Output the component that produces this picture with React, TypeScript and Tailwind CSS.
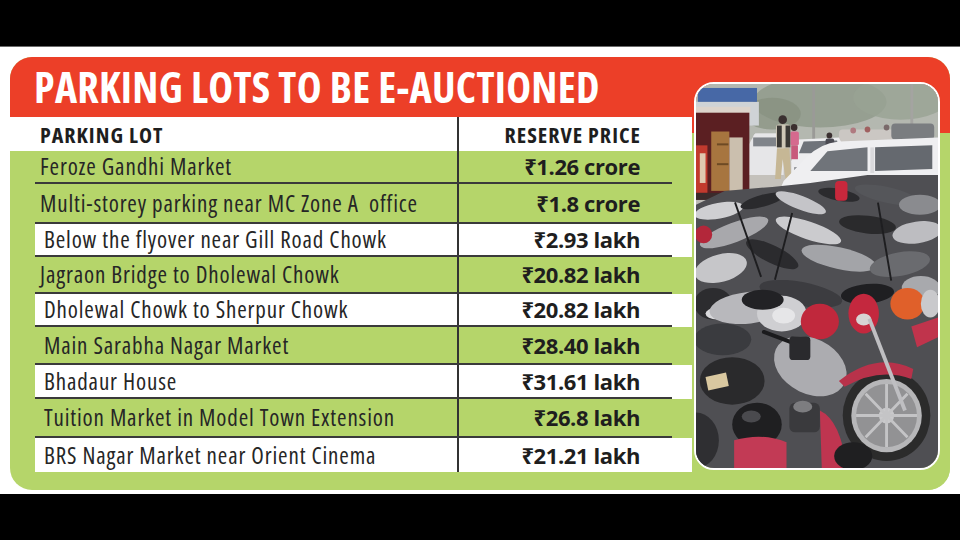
import React from 'react';

type Row = { name: string; price: string; white: boolean; h: number; pad: string };

const ROWS: Row[] = [
  { name: 'Feroze Gandhi Market', price: '₹1.26 crore', white: false, h: 33, pad: 'pl-[5px]' },
  { name: 'Multi-storey parking near MC Zone A  office', price: '₹1.8 crore', white: false, h: 40, pad: 'pl-[5px]' },
  { name: 'Below the flyover near Gill Road Chowk', price: '₹2.93 lakh', white: true, h: 33, pad: 'pl-[9px]' },
  { name: 'Jagraon Bridge to Dholewal Chowk', price: '₹20.82 lakh', white: false, h: 37, pad: 'pl-[5px]' },
  { name: 'Dholewal Chowk to Sherpur Chowk', price: '₹20.82 lakh', white: true, h: 33, pad: 'pl-[9px]' },
  { name: 'Main Sarabha Nagar Market', price: '₹28.40 lakh', white: false, h: 38, pad: 'pl-[9px]' },
  { name: 'Bhadaur House', price: '₹31.61 lakh', white: true, h: 34, pad: 'pl-[9px]' },
  { name: 'Tuition Market in Model Town Extension', price: '₹26.8 lakh', white: false, h: 39, pad: 'pl-[9px]' },
  { name: 'BRS Nagar Market near Orient Cinema', price: '₹21.21 lakh', white: true, h: 34, pad: 'pl-[9px]' },
];

const Photo = () => (
  <svg viewBox="0 0 254 388" className="block h-full w-full" preserveAspectRatio="none">
    {/* street + haze */}
    <rect width="254" height="388" fill="#bdbbb5" />
    <rect width="254" height="62" fill="#b4b8b0" />
    <ellipse cx="130" cy="18" rx="70" ry="26" fill="#8f9989" opacity="0.8" />
    <ellipse cx="215" cy="14" rx="50" ry="22" fill="#98a294" opacity="0.8" />
    <ellipse cx="80" cy="30" rx="30" ry="16" fill="#86907f" opacity="0.7" />
    <rect x="122" y="0" width="3" height="58" fill="#9a9a97" />
    <rect x="225" y="0" width="3" height="50" fill="#a4a4a1" />
    <rect x="0" y="18" width="66" height="24" fill="#cfd3d6" />
    <rect x="2" y="4" width="62" height="14" fill="#4768a6" />
    <rect x="0" y="56" width="254" height="60" fill="#c4c1bb" />
    {/* distant traffic */}
    <rect x="60" y="50" width="40" height="12" rx="4" fill="#dcdcde" />
    <rect x="150" y="46" width="60" height="12" rx="4" fill="#cbc7c3" />
    <circle cx="180" cy="46" r="3" fill="#a06060" />
    <circle cx="200" cy="44" r="3" fill="#7a6a6a" />
    <circle cx="165" cy="47" r="3" fill="#b07a80" />
    <rect x="205" y="40" width="45" height="16" rx="4" fill="#7a7d80" />
    {/* white car mid-left */}
    <path d="M55 62 L62 50 L88 50 L92 62 L92 92 L55 92 Z" fill="#e6e6e8" />
    <rect x="60" y="54" width="26" height="9" fill="#80848a" />
    {/* white car centre */}
    <path d="M100 78 L108 56 L150 54 L158 70 L158 96 L100 98 Z" fill="#ededef" />
    <path d="M108 70 L113 58 L148 57 L152 70 Z" fill="#6f737a" />
    <rect x="103" y="84" width="30" height="6" fill="#8d8f93" />
    {/* pink person */}
    <circle cx="103" cy="44" r="3.5" fill="#3b2f2f" />
    <rect x="99" y="48" width="9" height="14" rx="2" fill="#d56a8e" />
    <rect x="100" y="62" width="7" height="14" fill="#c85a7c" />
    {/* standing man */}
    <circle cx="91" cy="36" r="4.5" fill="#3a3030" />
    <rect x="84" y="41" width="15" height="24" rx="3" fill="#cfc8b8" />
    <rect x="85" y="42" width="5" height="22" fill="#3b3936" />
    <rect x="94" y="42" width="5" height="22" fill="#3b3936" />
    <path d="M85 65 L98 65 L100 96 L94 96 L91 76 L89 96 L83 96 Z" fill="#c6b795" />
    {/* boy */}
    <circle cx="140" cy="52" r="3" fill="#3a3030" />
    <rect x="136" y="55" width="9" height="20" rx="2" fill="#4a4a52" />
    {/* big white car right */}
    <path d="M86 112 L92 98 L116 74 Q130 60 150 58 L254 54 L254 118 L86 118 Z" fill="#efeff1" />
    <path d="M120 88 L138 68 L180 64 L180 88 Z" fill="#70747a" />
    <path d="M188 64 L248 62 L248 86 L188 88 Z" fill="#65696f" />
    <rect x="183" y="64" width="4" height="26" fill="#d9d9dc" />
    <rect x="210" y="95" width="16" height="4" rx="2" fill="#9c9ea2" />
    {/* truck */}
    <rect x="0" y="25" width="56" height="92" fill="#5b1f22" />
    <rect x="0" y="23" width="57" height="6" fill="#ddd4cb" />
    <rect x="16" y="48" width="19" height="60" fill="#a7753f" />
    <rect x="22" y="60" width="12" height="2" fill="#6d4a24" />
    <rect x="22" y="80" width="12" height="2" fill="#6d4a24" />
    <rect x="35" y="54" width="14" height="54" fill="#cbbfae" />
    <rect x="0" y="62" width="12" height="48" fill="#c23a2e" />
    <rect x="4" y="70" width="6" height="30" fill="#e0c8b0" />
    <rect x="0" y="110" width="58" height="7" fill="#3b2b2b" />
    {/* motorcycles base */}
    <path d="M0 122 L30 108 L80 104 L120 100 L180 92 L254 92 L254 388 L0 388 Z" fill="#4f4f53" />
    {/* upper rows of bikes */}
    <ellipse cx="24" cy="128" rx="26" ry="8" fill="#cfcfd2" transform="rotate(-10 24 128)" />
    <ellipse cx="70" cy="118" rx="24" ry="6" fill="#2a2a2d" transform="rotate(-15 70 118)" />
    <ellipse cx="110" cy="120" rx="28" ry="7" fill="#c4c4c8" transform="rotate(20 110 120)" />
    <ellipse cx="150" cy="112" rx="22" ry="6" fill="#2b2b2e" transform="rotate(10 150 112)" />
    <rect x="146" y="98" width="13" height="20" rx="4" fill="#c8283c" />
    <ellipse cx="200" cy="112" rx="34" ry="8" fill="#55565a" transform="rotate(12 200 112)" />
    <ellipse cx="235" cy="122" rx="22" ry="10" fill="#8a8b8f" />
    <ellipse cx="40" cy="150" rx="38" ry="10" fill="#a8a8ac" transform="rotate(-20 40 150)" />
    <ellipse cx="8" cy="152" rx="9" ry="9" fill="#b3273a" />
    <ellipse cx="118" cy="148" rx="36" ry="9" fill="#cbcbce" transform="rotate(18 118 148)" />
    <ellipse cx="180" cy="142" rx="30" ry="9" fill="#2a2a2c" transform="rotate(6 180 142)" />
    <ellipse cx="232" cy="150" rx="26" ry="11" fill="#bdbdc1" transform="rotate(-8 232 150)" />
    <ellipse cx="80" cy="172" rx="30" ry="9" fill="#2b2b2e" transform="rotate(25 80 172)" />
    <ellipse cx="150" cy="176" rx="40" ry="11" fill="#a3a4a8" transform="rotate(12 150 176)" />
    <ellipse cx="214" cy="182" rx="32" ry="12" fill="#6a6b6f" transform="rotate(-10 214 182)" />
    <ellipse cx="26" cy="186" rx="28" ry="14" fill="#c6c6c9" transform="rotate(-14 26 186)" />
    <rect x="40" y="120" width="2" height="80" fill="#1e1e20" transform="rotate(-20 40 120)" />
    <rect x="100" y="130" width="2" height="70" fill="#1e1e20" transform="rotate(15 100 130)" />
    <rect x="190" y="120" width="2" height="80" fill="#1e1e20" transform="rotate(-10 190 120)" />
    <ellipse cx="18" cy="222" rx="20" ry="16" fill="#2c2c2f" />
    <ellipse cx="22" cy="232" rx="12" ry="6" fill="#d9d9dc" />
    <ellipse cx="110" cy="212" rx="44" ry="12" fill="#3c3c40" transform="rotate(10 110 212)" />
    <ellipse cx="180" cy="212" rx="28" ry="10" fill="#1f1f22" transform="rotate(-5 180 212)" />
    <ellipse cx="236" cy="206" rx="20" ry="12" fill="#a8a9ad" />
    {/* lower large bikes */}
    <ellipse cx="56" cy="226" rx="42" ry="16" fill="#b8b8bc" transform="rotate(-6 56 226)" />
    <ellipse cx="90" cy="232" rx="26" ry="18" fill="#cfcfd2" />
    <ellipse cx="92" cy="234" rx="12" ry="8" fill="#e6e6e8" />
    <ellipse cx="70" cy="218" rx="22" ry="10" fill="#222225" />
    <ellipse cx="130" cy="240" rx="20" ry="18" fill="#c0283c" />
    <ellipse cx="176" cy="232" rx="16" ry="20" fill="#c4283e" />
    <ellipse cx="176" cy="238" rx="8" ry="6" fill="#d7d4d4" />
    <ellipse cx="222" cy="222" rx="18" ry="16" fill="#e0602a" />
    <ellipse cx="246" cy="222" rx="10" ry="14" fill="#c9c9cc" />
    <ellipse cx="28" cy="258" rx="30" ry="16" fill="#3a3b3f" />
    <ellipse cx="120" cy="285" rx="40" ry="28" fill="#acacb0" transform="rotate(25 120 285)" />
    <ellipse cx="38" cy="300" rx="34" ry="24" fill="#2a2a2c" />
    <rect x="10" y="296" width="22" height="14" fill="#d9c8a0" transform="rotate(-12 10 296)" />
    <rect x="70" y="248" width="46" height="4" rx="2" fill="#1b1b1d" transform="rotate(20 70 248)" />
    <rect x="98" y="255" width="22" height="24" rx="4" fill="#2a2a2d" />
    {/* wheel */}
    <circle cx="200" cy="335" r="46" fill="#2b2b2b" />
    <circle cx="200" cy="335" r="37" fill="#b7b7b9" />
    <circle cx="200" cy="335" r="32" fill="#929294" />
    <circle cx="200" cy="335" r="8" fill="#c9c9cb" />
    <path d="M200 303 L200 367 M168 335 L232 335 M178 313 L222 357 M222 313 L178 357" stroke="#c4c4c6" strokeWidth="3" />
    <path d="M150 300 Q190 270 228 288 L226 298 Q192 286 156 306 Z" fill="#b8324a" />
    <path d="M226 245 L254 236 L254 256 L232 266 Z" fill="#c0344c" />
    <rect x="180" y="238" width="4" height="100" fill="#bfbfc2" transform="rotate(-22 180 238)" />
    {/* helmet & red fairings bottom */}
    <ellipse cx="64" cy="344" rx="26" ry="22" fill="#1f1f21" />
    <ellipse cx="58" cy="336" rx="10" ry="6" fill="#4a4a4e" />
    <path d="M40 360 Q70 352 95 362 L95 388 L40 388 Z" fill="#c23a55" />
    <path d="M130 330 Q152 340 158 388 L132 388 Z" fill="#bf3550" />
    <rect x="98" y="322" width="32" height="30" rx="6" fill="#3a3a3d" />
    <ellipse cx="112" cy="326" rx="10" ry="6" fill="#7d7d80" />
    <ellipse cx="0" cy="360" rx="24" ry="28" fill="#2f2f32" />
    <ellipse cx="165" cy="376" rx="20" ry="14" fill="#1f1f21" />
  </svg>
);

export default function App() {
  return (
    <div className="flex h-[540px] w-[960px] flex-col bg-black font-['Open_Sans','Noto_Sans',sans-serif]">
      <div className="h-[46px] shrink-0" />
      <div className="flex-1 border-t border-[#6a6a6a] bg-white px-[10px] pt-[10px] pb-[4px]">
        <div className="flex h-full overflow-hidden rounded-[22px] bg-[#b5d56a]">
          {/* table column */}
          <div className="flex w-[682px] flex-col">
            <div className="flex h-[60px] shrink-0 items-center bg-[#ec3f28] pl-[24px]">
              <h1 className="text-[42px] font-bold leading-none tracking-[0.3px] text-white font-stretch-condensed">
                PARKING LOTS TO BE E-AUCTIONED
              </h1>
            </div>
            <div className="flex h-[34px] shrink-0 bg-white pl-[25px] text-[22px] font-bold tracking-[1px] text-[#1e1e1e] font-stretch-condensed">
              <div className="flex w-[424px] items-center border-r-2 border-[#333] pl-[5px]">PARKING LOT</div>
              <div className="flex w-[213px] items-center justify-end pr-[31px]">RESERVE PRICE</div>
            </div>
            {ROWS.map((r, i) => (
              <div
                key={i}
                style={{ height: r.h }}
                className={`ml-[25px] flex shrink-0 ${r.white ? 'bg-white' : ''}`}
              >
                <div
                  className={`flex w-[637px] ${i < ROWS.length - 1 ? 'border-b-2 border-[#3a3a3a]' : ''}`}
                >
                  <div
                    className={`flex w-[424px] items-center whitespace-pre border-r-2 border-[#333] text-[23px] tracking-[0.85px] text-[#262626] font-stretch-[83%] ${r.pad}`}
                  >
                    {r.name}
                  </div>
                  <div className="flex w-[213px] items-center justify-end pr-[32px] text-[22px] font-bold tracking-[-0.4px] text-[#1e1e1e]">
                    {r.price}
                  </div>
                </div>
              </div>
            ))}
          </div>
          {/* photo column */}
          <div className="flex flex-1 flex-col bg-[linear-gradient(to_bottom,#ec3f28_0px,#ec3f28_76px,#b5d56a_76px)] pt-[25px] pr-[10px] pl-[2px]">
            <div className="h-[388px] overflow-hidden rounded-[20px] border-2 border-white">
              <Photo />
            </div>
          </div>
        </div>
      </div>
      <div className="h-[46px] shrink-0" />
    </div>
  );
}
